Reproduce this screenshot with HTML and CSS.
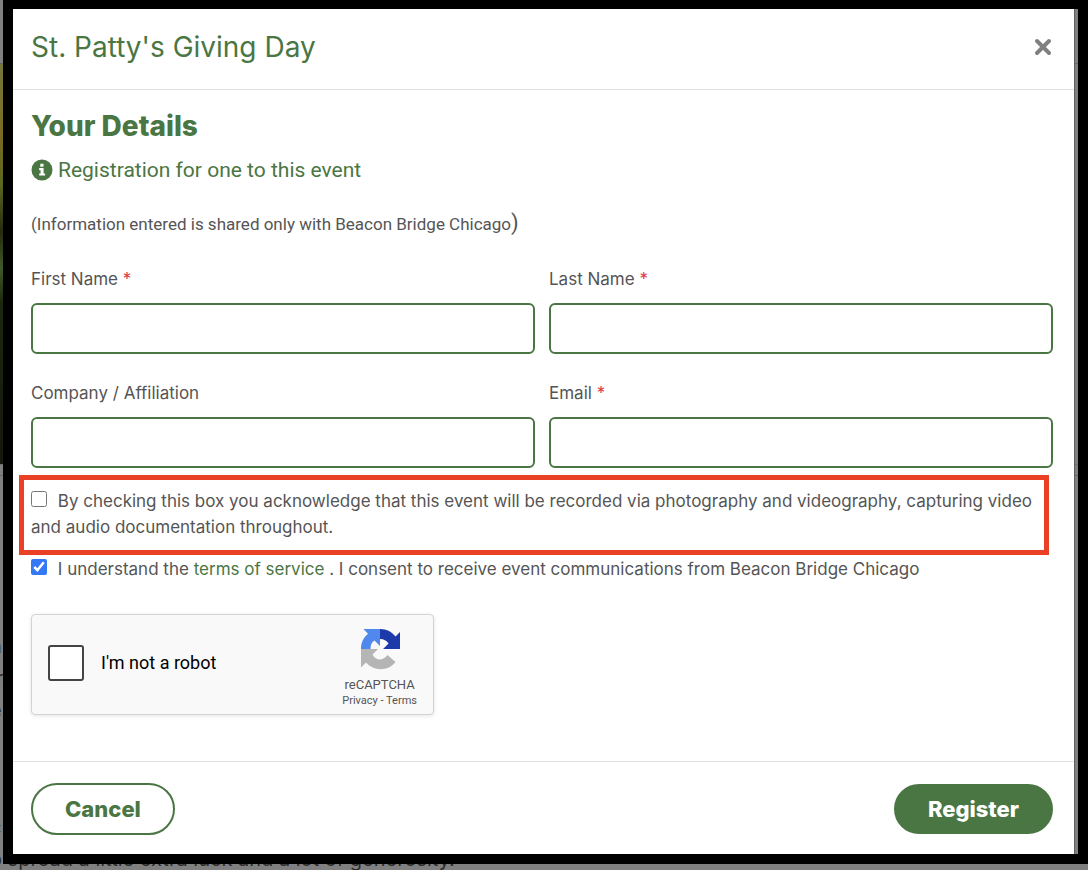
FILE: index.html
```html
<!DOCTYPE html>
<html lang="en">
<head>
    <meta charset="UTF-8">
    <meta name="viewport" content="width=device-width, initial-scale=1.0">
    <title>St. Patty's Giving Day</title>
    <link rel="stylesheet" href="styles.css">
</head>
<body>
    <div class="page">
        <div class="page-nav"></div>
        <div class="hero"></div>
        <div class="page-bar"></div>
        <div class="page-text">
            <p>n<br>m<br>e</p>
            <p>s</p>
            <p class="last">c<br>o spread a little extra luck and a lot of generosity.</p>
        </div>
    </div>

    <div class="overlay">
        <form class="modal" id="register-form">
            <div class="modal-header">
                <h1>St. Patty's Giving Day</h1>
                <button type="button" class="close-btn" aria-label="Close">
                    <svg viewBox="0 0 18 18" width="18" height="18"><path d="M3 3L15 15M15 3L3 15"/></svg>
                </button>
            </div>

            <div class="modal-body">
                <h2>Your Details</h2>
                <p class="info">
                    <svg viewBox="0 0 22 22" width="22" height="22">
                        <circle cx="11" cy="11" r="10.5"/>
                        <path d="M9.3 4.7h3.2v3H9.3zM8.2 9h4.4v5.4h1.5v2.2H8.2v-2.2h1.4v-3.2H8.2z"/>
                    </svg>
                    Registration for one to this event
                </p>
                <p class="note">(Information entered is shared only with Beacon Bridge Chicago<span>)</span></p>

                <div class="fields">
                    <div class="field">
                        <label for="first-name">First Name <span class="required">*</span></label>
                        <input type="text" id="first-name" required>
                    </div>
                    <div class="field">
                        <label for="last-name">Last Name <span class="required">*</span></label>
                        <input type="text" id="last-name" required>
                    </div>
                    <div class="field">
                        <label for="company">Company / Affiliation</label>
                        <input type="text" id="company">
                    </div>
                    <div class="field">
                        <label for="email">Email <span class="required">*</span></label>
                        <input type="email" id="email" required>
                    </div>
                </div>

                <div class="check highlight">
                    <input type="checkbox" id="recording">
                    <label for="recording">By checking this box you acknowledge that this event will be recorded via photography and videography, capturing video and audio documentation throughout.</label>
                </div>
                <div class="check">
                    <input type="checkbox" id="terms" checked>
                    <label for="terms">I understand the <a href="#">terms of service</a> . I consent to receive event communications from Beacon Bridge Chicago</label>
                </div>

                <div class="captcha">
                    <input type="checkbox" id="robot">
                    <label for="robot">I'm not a robot</label>
                    <div class="captcha-brand">
                        <svg viewBox="0 0 40 42" width="40" height="42">
                            <path fill="#1c3aa9" d="M20 1C27 1 32 4 35.500 8.500L40 4V21H23L28.500 15.500C26.500 12.500 24 11 20 11z"/>
                            <path fill="#5188ee" d="M20 1V18L14.500 12.500C11.500 14.500 10.500 17 10.500 21H1C1 14.500 3.500 9.500 8 5.800L3.500 1z"/>
                            <path fill="#b5b5b5" d="M1 21H18L12.500 26.500C16 33 23 33 27.500 27L35.500 34C28 43.500 14 43.500 6 34.500L1 39.500z"/>
                        </svg>
                        <span class="captcha-name">reCAPTCHA</span>
                        <span class="captcha-links"><a href="#">Privacy</a> - <a href="#">Terms</a></span>
                    </div>
                </div>
            </div>

            <div class="modal-footer">
                <button type="button" class="btn btn-outline">Cancel</button>
                <button type="submit" class="btn btn-solid">Register</button>
            </div>
        </form>
    </div>
</body>
</html>
```

FILE: styles.css
```css
* {
    box-sizing: border-box;
}

body {
    margin: 0;
    background-color: #808080;
    color: #555;
    font-family: Roboto, Arial, sans-serif;
    font-size: 17px;
}

h1, h2, p {
    margin: 0;
}

a {
    color: #4a7643;
    text-decoration: none;
}

/* page behind the dialog */
.page {
    height: 100vh;
    overflow: hidden;
}

.page-nav {
    height: 64px;
    border-bottom: 1px solid #666;
}

.hero {
    width: 50%;
    height: 400px;
    background: linear-gradient(#77783a, #796b22 18%, #5c681e 30%, #262b10 42%, #3f5a2a 51%, #1d270e 60%, #15180c);
}

.page-bar {
    height: 12px;
    border-top: 1px solid #6e6e6e;
    border-bottom: 1px solid #666;
}

.page-text {
    margin: 154px 0 0 -10px;
    color: #2b2b2b;
    font-family: Inter, sans-serif;
    font-size: 20px;
    line-height: 32px;
}

.page-text p {
    margin-bottom: 20px;
}

.page-text .last {
    margin-top: 33px;
}

.overlay {
    position: absolute;
    top: 0;
    right: 0;
    left: 3px;
    min-height: calc(100vh - 6px);
    padding-right: 3px;
    border: 10px solid #000;
    border-top-width: 9px;
}

.modal {
    border-right: 1px solid #606060;
    background-color: #fff;
}

.modal-header {
    display: flex;
    align-items: center;
    justify-content: space-between;
    height: 81px;
    padding: 0 22px 4px 18px;
    border-bottom: 1px solid #dee2e6;
}

h1, h2 {
    color: #4a7643;
    font-family: Inter, sans-serif;
    font-size: 28px;
    line-height: 36px;
}

h1 {
    font-weight: 400;
}

h2 {
    font-weight: 800;
}

.close-btn {
    display: flex;
    padding: 0;
    border: none;
    background: none;
    cursor: pointer;
}

.close-btn path {
    stroke: #808080;
    stroke-width: 4;
    stroke-linecap: round;
}

.modal-body {
    padding: 18px 21px 46px 18px;
}

.info {
    display: flex;
    align-items: center;
    gap: 5px;
    margin-top: 10px;
    color: #4a7643;
    font-size: 21px;
    line-height: 32px;
}

.info circle {
    fill: #4a7643;
}

.info path {
    fill: #fff;
}

.note {
    margin-top: 23px;
    line-height: 28px;
}

.note span {
    font-size: 22px;
}

.fields {
    display: grid;
    grid-template-columns: 1fr 1fr;
    gap: 26px 14px;
    margin-top: 28px;
}

.field label {
    display: block;
    margin-bottom: 11px;
    font-family: Inter, sans-serif;
    line-height: 26px;
}

.required {
    color: #dc3545;
}

.field input {
    display: block;
    width: 100%;
    height: 51px;
    padding: 0 12px;
    border: 2px solid #4a7643;
    border-radius: 6px;
    font-size: 17px;
}

.check {
    font-family: Inter, sans-serif;
    line-height: 26px;
}

.check input {
    width: 16px;
    height: 16px;
    margin: 0 6px 0 0;
    accent-color: #3478f6;
}

.highlight {
    margin: 7px 4px 1px -12px;
    padding: 8px 7px 10px;
    border: 5px solid #ea4025;
}

.captcha {
    display: flex;
    align-items: center;
    width: 403px;
    height: 101px;
    margin-top: 32px;
    padding: 0 16px 4px 16px;
    border: 1px solid #d3d3d3;
    border-radius: 4px;
    background-color: #f9f9f9;
    box-shadow: 0 1px 4px rgba(0, 0, 0, 0.1);
    color: #000;
    font-size: 18px;
}

.captcha input {
    appearance: none;
    width: 36px;
    height: 36px;
    margin: 0 17px 0 0;
    border: 2px solid #444;
    border-radius: 3px;
    background-color: #fff;
}

.captcha-brand {
    display: flex;
    flex-direction: column;
    align-items: center;
    margin-left: auto;
    padding-top: 10px;
    color: #555;
}

.captcha-name {
    margin-top: 6px;
    font-size: 13px;
    line-height: 18px;
}

.captcha-links {
    font-size: 11px;
    line-height: 14px;
}

.captcha-links a {
    color: #555;
}

.modal-footer {
    display: flex;
    align-items: center;
    justify-content: space-between;
    padding: 21px 21px 19px 18px;
    border-top: 1px solid #dee2e6;
}

.btn {
    height: 52px;
    padding: 0 32px;
    border: 2px solid #4a7643;
    border-radius: 26px;
    font-family: Inter, sans-serif;
    font-size: 22px;
    font-weight: 800;
    cursor: pointer;
}

.btn-outline {
    background-color: #fff;
    color: #4a7643;
}

.btn-solid {
    height: 50px;
    background-color: #4a7643;
    color: #fff;
}
```
